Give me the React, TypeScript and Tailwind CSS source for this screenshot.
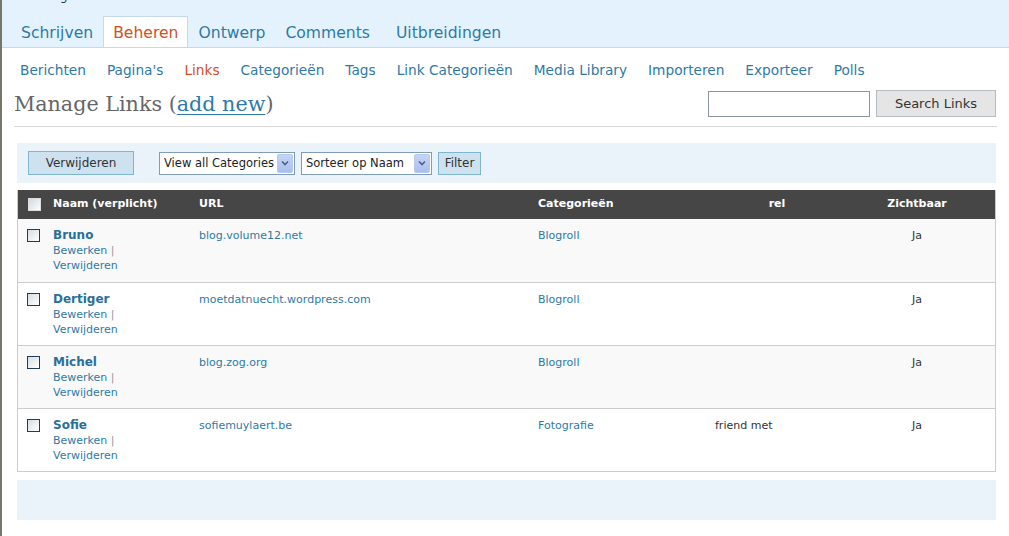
const tabs = ['Schrijven', 'Beheren', 'Ontwerp', 'Comments', 'Uitbreidingen'];
const subnav = ['Berichten', "Pagina's", 'Links', 'Categorieën', 'Tags', 'Link Categorieën', 'Media Library', 'Importeren', 'Exporteer', 'Polls'];

const links = [
  { name: 'Bruno', url: 'blog.volume12.net', cat: 'Blogroll', rel: '', visible: 'Ja' },
  { name: 'Dertiger', url: 'moetdatnuecht.wordpress.com', cat: 'Blogroll', rel: '', visible: 'Ja' },
  { name: 'Michel', url: 'blog.zog.org', cat: 'Blogroll', rel: '', visible: 'Ja' },
  { name: 'Sofie', url: 'sofiemuylaert.be', cat: 'Fotografie', rel: 'friend met', visible: 'Ja' },
];

const cols = 'grid grid-cols-[35px_146px_339px_177px_124px_1fr]';

function Checkbox({ dark = false }: { dark?: boolean }) {
  return (
    <span
      className={`inline-block w-[13px] h-[13px] border ${
        dark ? 'border-[#ddd] bg-gradient-to-br from-[#cfd8e0] to-white' : 'border-[#1c3e5a] bg-gradient-to-br from-[#d8dde2] to-white'
      }`}
    />
  );
}

function SelectBox({ label, width }: { label: string; width: string }) {
  return (
    <div className={`${width} h-[23px] bg-white border border-[#7f9db9] flex items-center justify-between pl-[4px] pr-[1px]`}>
      <span className="text-[11.5px] text-[#222] whitespace-nowrap pt-[2px]">{label}</span>
      <span className="w-[16px] h-[19px] rounded-[2px] bg-gradient-to-b from-[#c5d4f5] to-[#a9bff0] border border-[#b8c9ef] flex items-center justify-center">
        <svg width="8" height="6" viewBox="0 0 8 6">
          <path d="M1 1.5 L4 4.5 L7 1.5" stroke="#4d6185" strokeWidth="1.6" fill="none" />
        </svg>
      </span>
    </div>
  );
}

export default function App() {
  return (
    <div className="min-h-[536px] bg-white border-l-2 border-[#76766a] font-['DejaVu_Sans',sans-serif] text-[#333]">
      {/* Header tabs */}
      <div className="h-[48px] bg-[#e4f2fd] border-b border-[#c6d9e9] relative overflow-hidden">
        <div className="absolute left-[58px] -top-[10px] text-[#333] text-[12px] leading-none">g</div>
        <div className="flex items-end h-full pl-[9px]">
          {tabs.map((t) => (
            <div
              key={t}
              className={`h-[32px] px-[9px] pt-[3px] flex items-center text-[15.6px] -mb-px border border-b-0 ${
                t === 'Beheren'
                  ? 'bg-white border-[#c6d9e9] text-[#d54e21]'
                  : 'border-transparent text-[#2e7aa6]'
              } ${t === 'Uitbreidingen' ? 'ml-[6px]' : ''}`}
            >
              {t}
            </div>
          ))}
        </div>
      </div>

      {/* Sub nav */}
      <div className="flex gap-[21px] pl-[18px] pt-[12px] h-[42px] text-[13.7px]">
        {subnav.map((s) => (
          <span key={s} className={s === 'Links' ? 'text-[#d54e21]' : 'text-[#2e7aa6]'}>
            {s}
          </span>
        ))}
      </div>

      {/* Title & search */}
      <div className="ml-[12px] mr-[12px] flex items-start justify-between border-b border-[#dadada] h-[37px]">
        <h2 className="font-['DejaVu_Serif',serif] text-[20.7px] text-[#666] leading-none pt-[4px]">
          Manage Links (<span className="text-[#2e7aa6] underline underline-offset-[3px] decoration-1">add new</span>)
        </h2>
        <div className="flex gap-[6px] pt-[1px] mr-[1px]">
          <div className="w-[162px] h-[26px] border border-[#8a98a6] bg-white" />
          <div className="w-[120px] h-[27px] -mt-[1px] bg-[#e5e5e5] border border-[#b5bdc2] flex items-center justify-center text-[13px] text-[#333]">
            Search Links
          </div>
        </div>
      </div>

      {/* Table nav */}
      <div className="mt-[16px] ml-[15px] mr-[13px] h-[40px] bg-[#eaf3fa] flex items-center pl-[11px]">
        <div className="w-[106px] h-[24px] bg-[#cee1ef] border border-[#80b5d0] flex items-center justify-center text-[12px] text-[#333]">
          Verwijderen
        </div>
        <div className="ml-[25px] flex gap-[6px] items-center">
          <SelectBox label="View all Categories" width="w-[136px]" />
          <SelectBox label="Sorteer op Naam" width="w-[131px]" />
          <div className="w-[43px] h-[23px] bg-[#cee1ef] border border-[#80b5d0] flex items-center justify-center text-[12px] text-[#333]">
            Filter
          </div>
        </div>
      </div>

      {/* Table */}
      <div className="mt-[7px] ml-[15px] mr-[13px] border border-[#ccc] border-t-0">
        <div className={`${cols} h-[29px] bg-[#464646] text-white text-[11px] font-bold items-center`}>
          <div className="pl-[10px] flex items-center">
            <Checkbox dark />
          </div>
          <div>Naam (verplicht)</div>
          <div>URL</div>
          <div>Categorieën</div>
          <div className="text-center">rel</div>
          <div className="text-center">Zichtbaar</div>
        </div>
        {links.map((l, i) => (
          <div
            key={l.name}
            className={`${cols} h-[63px] text-[11px] pt-[9px] ${i % 2 === 0 ? 'bg-[#f9f9f9]' : 'bg-white'} ${
              i > 0 ? 'border-t border-[#ccc]' : ''
            }`}
          >
            <div className="pl-[9px] pt-[1px]">
              <Checkbox />
            </div>
            <div className="leading-[15px]">
              <div className="text-[12px] font-bold text-[#2a6f99]">{l.name}</div>
              <div className="text-[#2e7aa6]">
                Bewerken <span className="text-[#999]">|</span>
              </div>
              <div className="text-[#2e7aa6]">Verwijderen</div>
            </div>
            <div className="text-[#2e7aa6] leading-[16px]">{l.url}</div>
            <div className="text-[#2e7aa6] leading-[16px]">{l.cat}</div>
            <div className="text-[#333] leading-[16px]">{l.rel}</div>
            <div className="text-[#333] leading-[16px] text-center">{l.visible}</div>
          </div>
        ))}
      </div>

      {/* Bottom nav */}
      <div className="mt-[8px] ml-[15px] mr-[13px] h-[40px] bg-[#eaf3fa]" />
    </div>
  );
}
